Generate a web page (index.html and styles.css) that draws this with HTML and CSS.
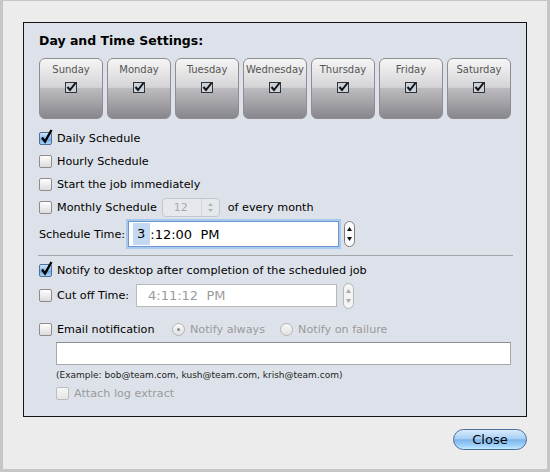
FILE: index.html
```html
<!DOCTYPE html>
<html lang="en">
<head>
  <meta charset="UTF-8">
  <title>Day and Time Settings</title>
  <link rel="stylesheet" href="styles.css">
</head>
<body>
  <div class="window">
    <div class="panel">
      <h2 class="title">Day and Time Settings:</h2>

      <div class="days">
        <div class="day"><span class="day-name">Sunday</span><svg class="day-check" width="12" height="11" viewBox="0 0 12 11"><rect x="0.5" y="0.5" width="11" height="10" fill="#c9d1dc" stroke="#333"/><path d="M2.5 5 L5 8 L10.5 1" fill="none" stroke="#111" stroke-width="2"/></svg></div>
        <div class="day"><span class="day-name">Monday</span><svg class="day-check" width="12" height="11" viewBox="0 0 12 11"><rect x="0.5" y="0.5" width="11" height="10" fill="#c9d1dc" stroke="#333"/><path d="M2.5 5 L5 8 L10.5 1" fill="none" stroke="#111" stroke-width="2"/></svg></div>
        <div class="day"><span class="day-name">Tuesday</span><svg class="day-check" width="12" height="11" viewBox="0 0 12 11"><rect x="0.5" y="0.5" width="11" height="10" fill="#c9d1dc" stroke="#333"/><path d="M2.5 5 L5 8 L10.5 1" fill="none" stroke="#111" stroke-width="2"/></svg></div>
        <div class="day"><span class="day-name">Wednesday</span><svg class="day-check" width="12" height="11" viewBox="0 0 12 11"><rect x="0.5" y="0.5" width="11" height="10" fill="#c9d1dc" stroke="#333"/><path d="M2.5 5 L5 8 L10.5 1" fill="none" stroke="#111" stroke-width="2"/></svg></div>
        <div class="day"><span class="day-name">Thursday</span><svg class="day-check" width="12" height="11" viewBox="0 0 12 11"><rect x="0.5" y="0.5" width="11" height="10" fill="#c9d1dc" stroke="#333"/><path d="M2.5 5 L5 8 L10.5 1" fill="none" stroke="#111" stroke-width="2"/></svg></div>
        <div class="day"><span class="day-name">Friday</span><svg class="day-check" width="12" height="11" viewBox="0 0 12 11"><rect x="0.5" y="0.5" width="11" height="10" fill="#c9d1dc" stroke="#333"/><path d="M2.5 5 L5 8 L10.5 1" fill="none" stroke="#111" stroke-width="2"/></svg></div>
        <div class="day"><span class="day-name">Saturday</span><svg class="day-check" width="12" height="11" viewBox="0 0 12 11"><rect x="0.5" y="0.5" width="11" height="10" fill="#c9d1dc" stroke="#333"/><path d="M2.5 5 L5 8 L10.5 1" fill="none" stroke="#111" stroke-width="2"/></svg></div>
      </div>

      <div class="row first">
        <span class="cb checked"><svg class="tick" width="14" height="16" viewBox="0 0 14 16"><path d="M3 8.5 L6 12.5 L12.5 1" fill="none" stroke="#000" stroke-width="2.4"/></svg></span>
        <span>Daily Schedule</span>
      </div>
      <div class="row"><span class="cb"></span><span>Hourly Schedule</span></div>
      <div class="row"><span class="cb"></span><span>Start the job immediately</span></div>
      <div class="row">
        <span class="cb"></span><span>Monthly Schedule</span>
        <span class="combo"><span class="combo-val">12</span><span class="combo-arrows"><svg width="7" height="11" viewBox="0 0 7 11"><path d="M1 4 L3.5 1 L6 4 Z M1 7 L3.5 10 L6 7 Z" fill="#b4b4b4"/></svg></span></span>
        <span class="after-combo">of every month</span>
      </div>

      <div class="row time-row">
        <span class="time-label">Schedule Time:</span>
        <span class="time-box focus"><span class="seg">3</span>:12:00&nbsp;&nbsp;PM</span>
        <svg class="stepper" width="11" height="26" viewBox="0 0 11 26"><rect x="0.5" y="0.5" width="10" height="25" rx="5" fill="#fbfbfb" stroke="#7d7d7d"/><path d="M3 10 L5.5 6 L8 10 Z M3 16 L5.5 20 L8 16 Z" fill="#111"/></svg>
      </div>

      <div class="sep"></div>

      <div class="row notify">
        <span class="cb checked"><svg class="tick" width="14" height="16" viewBox="0 0 14 16"><path d="M3 8.5 L6 12.5 L12.5 1" fill="none" stroke="#000" stroke-width="2.4"/></svg></span>
        <span>Notify to desktop after completion of the scheduled job</span>
      </div>
      <div class="row cut-row">
        <span class="cb"></span><span class="cut-label">Cut off Time:</span>
        <span class="time-box disabled">4:11:12&nbsp;&nbsp;PM</span>
        <svg class="stepper" width="11" height="26" viewBox="0 0 11 26"><rect x="0.5" y="0.5" width="10" height="25" rx="5" fill="#f4f4f4" stroke="#b5b5b5"/><path d="M3 10 L5.5 6 L8 10 Z M3 16 L5.5 20 L8 16 Z" fill="#a8a8a8"/></svg>
      </div>

      <div class="row email-row">
        <span class="cb"></span><span class="email-label">Email notification</span>
        <span class="radio on"></span><span class="muted">Notify always</span>
        <span class="radio second"></span><span class="muted">Notify on failure</span>
      </div>
      <div class="email-box"></div>
      <div class="example">(Example: bob@team.com, kush@team.com, krish@team.com)</div>
      <div class="row attach"><span class="cb off"></span><span class="muted">Attach log extract</span></div>
    </div>

    <div class="footer">
      <button class="close">Close</button>
    </div>
  </div>
</body>
</html>
```

FILE: styles.css
```css
body { margin: 0; font-family: "DejaVu Sans", Verdana, sans-serif; font-size: 11.2px; color: #000; }

.window {
  width: 550px; height: 472px; box-sizing: border-box;
  background: #ececec; border: solid #c6c6c6; border-width: 1px 3px 3px 3px;
  padding: 21px 20px 0 20px;
}
.panel {
  height: 395px; box-sizing: border-box;
  border: 1px solid #151515; background: #dde2ea;
  padding: 10px 13px 0 15px;
}
.title { margin: 0; font-size: 12.5px; font-weight: bold; line-height: 16px; }

/* day buttons */
.days { display: flex; gap: 4px; margin-top: 9px; }
.day {
  width: 64px; height: 61px; box-sizing: border-box;
  border: 1px solid #8e8e92; border-radius: 6px;
  background: linear-gradient(#f6f6f6 0%, #d4d4d7 48%, #bcbcc0 50%, #86868c 100%);
  display: flex; flex-direction: column; align-items: center;
}
.day-name { font-size: 10px; color: #555; margin-top: 5px; line-height: 12px; }
.day-check { margin-top: 6px; }

/* rows */
.row { display: flex; align-items: center; height: 23px; gap: 5px; }
.row.first { margin-top: 8px; }

.cb {
  position: relative; flex: none;
  width: 13px; height: 13px; box-sizing: border-box;
  border: 1px solid #8c8c8c; border-radius: 2px;
  background: linear-gradient(#fefefe, #dcdcdc);
}
.cb.checked { border-color: #4d6f9c; background: linear-gradient(#cfe5fb, #8bbdf0 50%, #6aa6e6 55%, #a9d6fd); }
.cb.off { border-color: #bcbcbc; background: linear-gradient(#f6f6f6, #e6e6e6); }
.tick { position: absolute; left: -1px; top: -4px; }

.combo {
  display: flex; align-items: center; justify-content: space-between;
  width: 58px; height: 19px; box-sizing: border-box;
  border: 1px solid #c3c6cb; border-radius: 4px; background: #e5e8ed;
}
.combo-val { color: #a9a9a9; padding-left: 11px; font-size: 11px; }
.combo-arrows { height: 17px; padding: 0 5px; border-left: 1px solid #d3d6db; display: flex; align-items: center; }
.after-combo { margin-left: 3px; }

.time-row { height: 30px; gap: 0; }
.time-label { width: 89px; }
.time-box {
  display: flex; align-items: center; box-sizing: border-box;
  width: 211px; height: 26px; font-size: 13px; background: #fff;
}
.time-box.focus { border: 1px solid #6b98d0; box-shadow: 0 0 0 2px #a8c8ee; padding-left: 4px; }
.seg { background: #c3d9f3; padding: 0 5px 0 4px; line-height: 22px; }
.stepper { margin-left: 5px; flex: none; }

.sep { width: 475px; height: 1px; background: #a2a5aa; margin: 6px 0 0 -1px; }

.notify { margin-top: 3px; }
.cut-row { height: 27px; gap: 0; }
.cut-row .cut-label { margin-left: 5px; width: 79px; }
.time-box.disabled { width: 201px; height: 23px; border: 1px solid #b9b9b9; color: #9c9c9c; padding-left: 11px; }
.cut-row .stepper { margin-left: 6px; }

.email-row { margin-top: 9px; gap: 0; }
.email-label { margin-left: 5px; width: 115px; }
.radio {
  width: 13px; height: 13px; box-sizing: border-box; flex: none;
  border: 1px solid #b3b3b3; border-radius: 50%;
  background: linear-gradient(#f8f8f8, #e2e2e2);
  display: flex; align-items: center; justify-content: center;
  margin-right: 5px;
}
.radio.on::after { content: ""; width: 3px; height: 3px; border-radius: 50%; background: #888; }
.radio.second { margin-left: 15px; }
.muted { color: #9a9a9a; }

.email-box {
  width: 455px; height: 23px; box-sizing: border-box; margin: 1px 0 0 17px;
  background: #fff; border: 1px solid #a8a8a8; border-top-color: #8c8c8c;
}
.example { margin: 3px 0 0 17px; font-size: 9px; line-height: 14px; color: #222; }
.attach { margin-left: 17px; height: 22px; }

/* footer */
.footer { display: flex; justify-content: flex-end; margin-top: 12px; }
.close {
  width: 74px; height: 21px; padding: 0;
  border: 1px solid #4a6c9c; border-radius: 11px;
  background: linear-gradient(#d9ecfd 0%, #a8cff4 45%, #7cb4ea 52%, #a3d4fb 85%, #c9ecff 100%);
  font-family: "DejaVu Sans", Verdana, sans-serif; font-size: 13px; color: #000;
}
```
